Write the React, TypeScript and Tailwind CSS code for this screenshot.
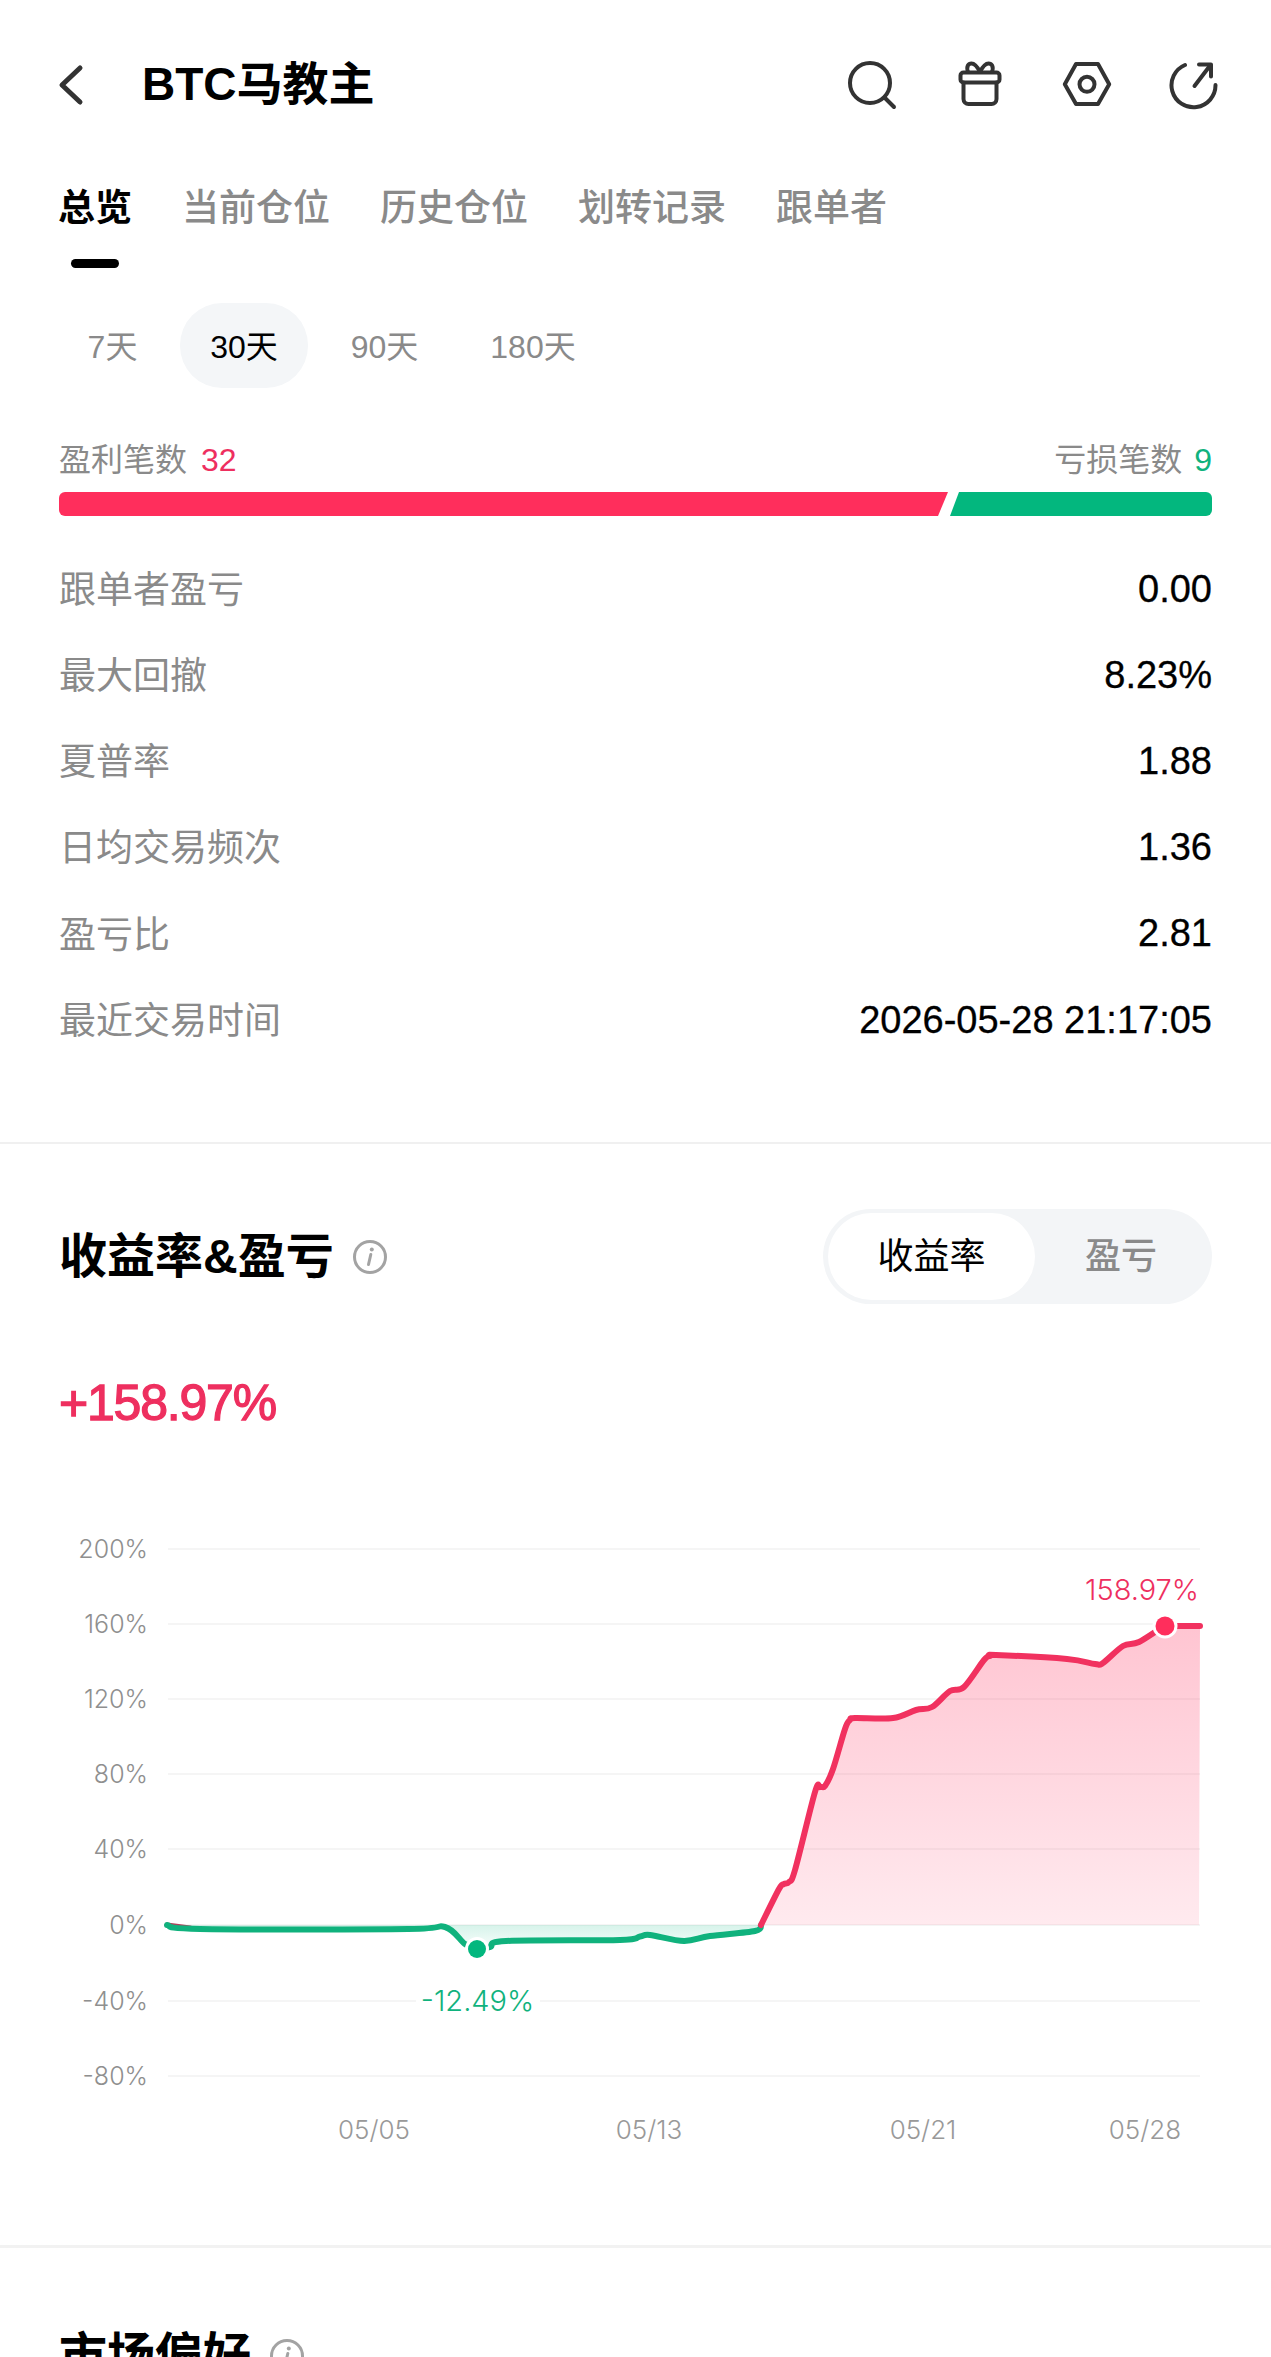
const RED = '#EE2F5F';
const GREEN = '#10B27D';

const tabs = ['总览', '当前仓位', '历史仓位', '划转记录', '跟单者'];

const stats = [
  ['跟单者盈亏', '0.00'],
  ['最大回撤', '8.23%'],
  ['夏普率', '1.88'],
  ['日均交易频次', '1.36'],
  ['盈亏比', '2.81'],
  ['最近交易时间', '2026-05-28 21:17:05'],
];

const gridLines = [
  ['200%', 1549],
  ['160%', 1624],
  ['120%', 1699],
  ['80%', 1774],
  ['40%', 1849],
  ['0%', 1925],
  ['-40%', 2001],
  ['-80%', 2076],
] as const;

const dates = [
  ['05/05', 374],
  ['05/13', 649],
  ['05/21', 923],
  ['05/28', 1145],
] as const;

type Pt = [number, number];

// traced from the picture, page coordinates
const greenPts: Pt[] = [
  [167, 1925], [200, 1929], [408, 1929], [445, 1927], [465, 1944], [477, 1949], [490, 1947], [506, 1941],
  [620, 1940], [640, 1936.5], [650, 1935], [684, 1941], [710, 1936], [755, 1931], [761, 1925],
];
const redPts: Pt[] = [
  [761, 1925], [779, 1889], [784, 1884], [789, 1882], [795, 1870], [815, 1792], [820, 1787], [825, 1786], [833, 1769], [845, 1729],
  [850, 1720], [855, 1718], [893, 1718], [916, 1710], [932, 1707], [950, 1691], [964, 1687], [984, 1660], [990, 1656], [996, 1655],
  [1067, 1659], [1095, 1664], [1103, 1663], [1123, 1646], [1139, 1642], [1165, 1626], [1175, 1626], [1200, 1626],
];

function linePath(pts: Pt[]) {
  let d = `M${pts[0][0]} ${pts[0][1] - 1500}`;
  for (let i = 0; i < pts.length - 1; i++) {
    const p0 = pts[i - 1] ?? pts[i];
    const p1 = pts[i];
    const p2 = pts[i + 1];
    const p3 = pts[i + 2] ?? p2;
    const c1x = p1[0] + (p2[0] - p0[0]) / 6;
    const c1y = p1[1] + (p2[1] - p0[1]) / 6;
    const c2x = p2[0] - (p3[0] - p1[0]) / 6;
    const c2y = p2[1] - (p3[1] - p1[1]) / 6;
    d += ` C${c1x} ${c1y - 1500} ${c2x} ${c2y - 1500} ${p2[0]} ${p2[1] - 1500}`;
  }
  return d;
}

function InfoIcon() {
  return (
    <svg width="36" height="36" viewBox="0 0 36 36" className="shrink-0">
      <circle cx="18" cy="18" r="15.5" fill="none" stroke="#a3a3a3" strokeWidth="3" />
      <circle cx="19.8" cy="10.5" r="2" fill="#a3a3a3" />
      <path d="M18.8 15.5 L16.5 25.5" stroke="#a3a3a3" strokeWidth="3" strokeLinecap="round" fill="none" />
    </svg>
  );
}

function HeaderIcons() {
  const common = { width: 52, height: 52, viewBox: '0 0 52 52', fill: 'none', stroke: '#333333', strokeWidth: 4, strokeLinecap: 'round' as const, strokeLinejoin: 'round' as const };
  return (
    <div className="flex gap-[55px] pr-[51px]">
      <svg {...common}>
        <circle cx="23" cy="25" r="20" />
        <path d="M37.5 39.5 L47 49" />
      </svg>
      <svg {...common}>
        <rect x="6.5" y="14.5" width="39" height="10" rx="3" />
        <path d="M9.5 24.5 V41 a5 5 0 0 0 5 5 H37.5 a5 5 0 0 0 5 -5 V24.5" />
        <path d="M14 14 C12 8 14.5 5.5 17.5 5.5 C21 5.5 24 10 26 14 C28 10 31 5.5 34.5 5.5 C37.5 5.5 40 8 38 14" />
      </svg>
      <svg {...common}>
        <path d="M3.8 26.3 L15 6 H37 L48.2 26.3 L37 46 H15 Z" />
        <circle cx="26" cy="26.3" r="7.5" />
      </svg>
      <svg {...common}>
        <path d="M17 7 A22 22 0 1 0 47.5 27" />
        <path d="M26.5 28 L42.5 7" />
        <path d="M31 6.5 H43 V18.5" />
      </svg>
    </div>
  );
}

function ReturnChart() {
  const greenLine = linePath(greenPts);
  const redLine = linePath(redPts);
  return (
    <svg width="1271" height="700" viewBox="0 0 1271 700" className="block font-['Inter',sans-serif] font-light">
      <defs>
        <linearGradient id="redFill" x1="0" y1="0" x2="0" y2="1">
          <stop offset="0" stopColor="#FF2E5C" stopOpacity="0.28" />
          <stop offset="1" stopColor="#FF2E5C" stopOpacity="0.1" />
        </linearGradient>
        <linearGradient id="greenFill" x1="0" y1="0" x2="0" y2="1">
          <stop offset="0" stopColor="#03B77E" stopOpacity="0.16" />
          <stop offset="1" stopColor="#03B77E" stopOpacity="0.02" />
        </linearGradient>
      </defs>

      {gridLines.map(([label, y]) => (
        <g key={label}>
          <line x1="168" x2="1200" y1={y - 1500} y2={y - 1500} stroke="#f5f5f5" strokeWidth="2" />
          <text x="148" y={y - 1500 + 9} textAnchor="end" fontSize="25" fill="#8f8f8f">{label}</text>
        </g>
      ))}

      {dates.map(([label, x]) => (
        <text key={label} x={x} y="639" textAnchor="middle" fontSize="26" fill="#999999">{label}</text>
      ))}

      <path d={`${redLine} L1199 425 Z`} fill="url(#redFill)" />
      <path d={`${greenLine} L440 425 Z`} fill="url(#greenFill)" />

      <path d="M167 425 L190 428" stroke="#b0405a" strokeWidth="5" strokeLinecap="round" fill="none" />
      <path d={greenLine} stroke={GREEN} strokeWidth="6" strokeLinecap="round" fill="none" />
      <path d={redLine} stroke="#F1315F" strokeWidth="6" strokeLinecap="round" fill="none" />

      <circle cx="477" cy="449" r="12" fill="#fff" />
      <circle cx="477" cy="449" r="9" fill="#03B77E" />
      <circle cx="1165" cy="126" r="12.5" fill="#fff" />
      <circle cx="1165" cy="126" r="9.5" fill="#FF2E5C" />

      <rect x="416" y="486" width="124" height="30" fill="#fff" />
      <text x="477.5" y="511" textAnchor="middle" fontSize="29" fill={GREEN}>-12.49%</text>
      <text x="1199" y="100" textAnchor="end" fontSize="29" fill={RED}>158.97%</text>
    </svg>
  );
}

export default function App() {
  return (
    <div className="h-[2357px] w-[1271px] overflow-hidden bg-white font-['Liberation_Sans','Noto_Sans_CJK_SC',sans-serif]">
      {/* Header */}
      <div className="flex h-[168px] items-center justify-between">
        <div className="flex items-center">
          <svg width="30" height="44" viewBox="0 0 30 44" fill="none" className="ml-[55px] translate-y-[1px]">
            <path d="M25 5 L7 22 L25 39" stroke="#333333" strokeWidth="5" strokeLinecap="round" strokeLinejoin="round" />
          </svg>
          <h1 className="ml-[57px] text-[46px] leading-[60px] font-bold text-black">BTC马教主</h1>
        </div>
        <HeaderIcons />
      </div>

      {/* Tabs */}
      <div className="flex gap-[50px] pl-[58px]">
        {tabs.map((tab, i) => (
          <div key={tab} className="flex flex-col items-center">
            <span className={i === 0 ? 'pt-[3px] text-[37px] leading-[75px] font-bold text-black' : 'pt-[3px] text-[37px] leading-[75px] font-medium text-[#8a8a8a]'}>{tab}</span>
            {i === 0 && <div className="mt-[13px] h-[9px] w-[48px] rounded-full bg-black" />}
          </div>
        ))}
      </div>

      {/* Period */}
      <div className="mt-[35px] flex gap-[13px] pl-[58px] text-[32px] text-[#8a8a8a]">
        <div className="h-[85px] w-[109px] pt-[3px] text-center leading-[82px]">7天</div>
        <div className="h-[85px] w-[128px] rounded-[42px] bg-[#f4f6f8] pt-[3px] text-center leading-[82px] text-black">30天</div>
        <div className="h-[85px] w-[127px] pt-[3px] text-center leading-[82px]">90天</div>
        <div className="h-[85px] w-[144px] pt-[3px] text-center leading-[82px]">180天</div>
      </div>

      {/* Win / loss */}
      <div className="px-[59px]">
        <div className="mt-[52px] flex h-[40px] items-center justify-between text-[32px] text-[#8a8a8a]">
          <div>盈利笔数<span className="ml-[14px] text-[#EE2F5F]">32</span></div>
          <div>亏损笔数<span className="ml-[12px] text-[#10B27D]">9</span></div>
        </div>
        <div className="mt-[12px] flex h-[24px] gap-[2px]">
          <div className="w-[889px] rounded-l-[6px] bg-[#FF2E5C] [clip-path:polygon(0_0,100%_0,calc(100%-10px)_100%,0_100%)]" />
          <div className="w-[262px] rounded-r-[6px] bg-[#03B77E] [clip-path:polygon(9px_0,100%_0,100%_100%,0_100%)]" />
        </div>
        <div className="mt-[30px]">
          {stats.map(([label, value]) => (
            <div key={label} className="flex h-[86.2px] items-center justify-between">
              <span className="pt-[3px] text-[37px] text-[#8a8a8a]">{label}</span>
              <span className="text-[38px] text-black [-webkit-text-stroke:0.3px_black]">{value}</span>
            </div>
          ))}
        </div>
      </div>

      <div className="mt-[79px] h-[2px] bg-[#f0f0f0]" />

      {/* Returns */}
      <div className="mt-[65px] flex items-center justify-between pr-[59px] pl-[59px]">
        <div className="flex items-center gap-[18px]">
          <h2 className="text-[48px] leading-[60px] font-bold text-black">收益率&盈亏</h2>
          <InfoIcon />
        </div>
        <div className="flex h-[95px] w-[389px] items-center rounded-[48px] bg-[#f3f5f7] pl-[5px] text-[36px]">
          <div className="flex h-[87px] w-[207px] items-center justify-center rounded-[44px] bg-white text-black">收益率</div>
          <div className="flex-1 pr-[5px] text-center font-medium text-[#8a8a8a]">盈亏</div>
        </div>
      </div>

      <div className="mt-[69px] pl-[59px] text-[50px] leading-[60px] tracking-[-1.2px] text-[#EE2F5F] [-webkit-text-stroke:1.3px_#EE2F5F]">+158.97%</div>

      <div className="mt-[67px]">
        <ReturnChart />
      </div>

      <div className="mt-[45px] h-[3px] bg-[#f2f2f2]" />

      <div className="mt-[78px] flex items-center gap-[18px] pl-[59px]">
        <h2 className="text-[48px] leading-[60px] font-bold text-black">市场偏好</h2>
        <InfoIcon />
      </div>
    </div>
  );
}
